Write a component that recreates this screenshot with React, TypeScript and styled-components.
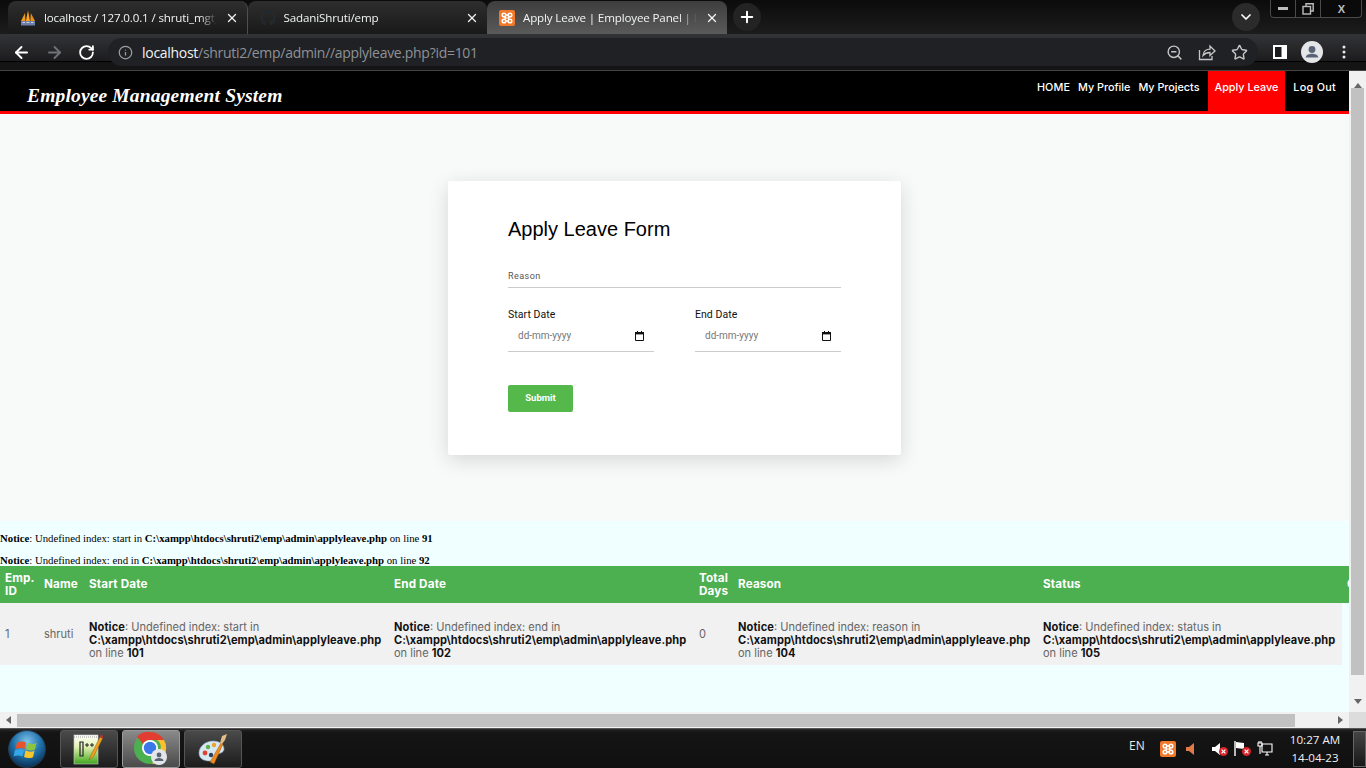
import React from "react";
import styled, { createGlobalStyle } from "styled-components";
import { ArrowLeft, ArrowRight, RotateCw, Info, ZoomOut, Star, ChevronDown, Plus, X } from "lucide-react";
import { FaGithub } from "react-icons/fa";

const Global = createGlobalStyle`
  html, body { margin: 0; padding: 0; height: 768px; overflow: hidden; background: #000; }
  #root { height: 768px; }
  * { box-sizing: border-box; }
`;

const Screen = styled.div`
  width: 1366px; height: 768px; display: flex; flex-direction: column; overflow: hidden;
  font-family: "Liberation Sans", Arial, sans-serif;
`;

/* ---------- browser chrome ---------- */
const TabStrip = styled.div`
  height: 34px; flex: none; display: flex; align-items: flex-start; padding-left: 8px;
  background: linear-gradient(#0b0b0b, #1c1c1c);
`;
const Tab = styled.div<{ $active?: boolean; $sep?: boolean }>`
  width: 239.5px; height: 33px; margin-top: 1px; flex: none;
  display: flex; align-items: center; padding: 0 8px 0 12px; gap: 8px;
  border-radius: 8px 8px 0 0;
  border-right: ${(p) => (p.$sep ? "1px solid #4f4f4f" : "none")};
  background: ${(p) => (p.$active ? "linear-gradient(#3e3e3e, #5a5a5a)" : "linear-gradient(#2e2e2e, #191919)")};
  color: #f1f3f4;
`;
const TabTitle = styled.span`
  flex: 1; min-width: 0; white-space: nowrap; overflow: hidden;
  font: 11.6px "Open Sans", sans-serif; letter-spacing: -0.15px;
  -webkit-mask-image: linear-gradient(to right, #000 90%, transparent 100%);
  mask-image: linear-gradient(to right, #000 90%, transparent 100%);
`;
const NewTab = styled.div`
  width: 28px; height: 28px; border-radius: 50%; background: #232323; margin: 3px 0 0 6px;
  display: flex; align-items: center; justify-content: center; color: #fff;
`;
const StripSpacer = styled.div`flex: 1;`;
const TabMenu = styled.div`
  width: 28px; height: 28px; border-radius: 50%; background: #2b2b2b; margin: 3px 10px 0 0;
  display: flex; align-items: center; justify-content: center; color: #fff;
`;
const WindowButtons = styled.div`
  width: 92px; height: 18px; display: flex; margin-right: 4px; background: #0a0a0a;
  border: 1px solid #4a4a4a; border-top: none; border-radius: 0 0 4px 4px;
`;
const WinButton = styled.div<{ $wide?: boolean }>`
  flex: ${(p) => (p.$wide ? "0 0 41px" : "0 0 25px")};
  display: flex; align-items: center; justify-content: center; color: #bdbdbd;
  font: bold 11px "Liberation Sans", sans-serif;
  border-right: ${(p) => (p.$wide ? "none" : "1px solid #4a4a4a")};
`;
const Toolbar = styled.div`
  height: 37px; flex: none; display: flex; align-items: center;
  background: linear-gradient(#333437 0, #1c1c1e 27px, #000 27px, #000 28px, #141414 28px);
  border-bottom: 1px solid #444;
`;
const NavIcons = styled.div`
  width: 108px; display: flex; align-items: center; gap: 14px; padding-left: 12px; flex: none;
`;
const UrlPill = styled.div`
  width: 1150px; height: 28px; border-radius: 14px; background: #202124; flex: none;
  display: flex; align-items: center; padding: 0 10px; color: #9aa0a6;
`;
const UrlText = styled.div`
  flex: 1; margin-left: 9px; font: 14px "Open Sans", sans-serif; color: #8e9297;
  letter-spacing: -0.29px; white-space: nowrap;
`;
const UrlHost = styled.span`color: #f1f3f4;`;
const PillIcons = styled.div`display: flex; align-items: center; gap: 15px; color: #c4c7c5;`;
const ToolIcons = styled.div`
  flex: 1; display: flex; align-items: center; gap: 14px; padding-left: 15px;
`;
const DotsSlot = styled.div`display: flex; margin-left: 5px;`;

/* ---------- page ---------- */
const Viewport = styled.div`
  flex: 1; min-height: 0; display: flex; overflow: hidden;
`;
const Page = styled.div`
  width: 1349px; flex: none; display: flex; flex-direction: column; overflow: hidden; background: #f0ffff;
`;
const Header = styled.header`
  height: 43px; flex: none; background: #000; border-bottom: 3px solid #ff0000;
  display: flex; justify-content: space-between; padding: 0 13px 0 27px;
`;
const Logo = styled.div`
  font: italic bold 19.5px "Liberation Serif", serif; color: #fff; padding-top: 14px; white-space: nowrap;
  letter-spacing: 0.16px;
`;
const NavList = styled.nav`display: flex; gap: 8px;`;
const NavItem = styled.a<{ $active?: boolean; $track?: number }>`
  height: 40px; padding: 0 ${(p) => (p.$active ? "7px" : "0")} 7px; display: flex; align-items: center;
  background: ${(p) => (p.$active ? "#ff0000" : "transparent")}; color: #fff;
  font: 500 10.8px Inter, sans-serif; white-space: nowrap;
  letter-spacing: ${(p) => p.$track ?? 0}px;
`;
const FormZone = styled.section`
  height: 407px; flex: none; background: #f8fafa; display: flex; justify-content: center; padding-top: 67px;
`;
const Card = styled.div`
  width: 453px; height: 274px; background: #fff; border-radius: 2px; padding: 36px 60px 0;
  box-shadow: 0 5px 20px rgba(0, 0, 0, 0.14);
`;
const FormTitle = styled.h2`
  margin: 0 0 25px; font: 400 20px/24px "Liberation Sans", sans-serif; color: #000;
`;
const ReasonField = styled.div`
  height: 22px; border-bottom: 1px solid #ccc; font: 9px/12px Roboto, sans-serif; color: #555; letter-spacing: 0.45px;
  padding-top: 4px;
`;
const DateRow = styled.div`display: flex; justify-content: space-between; margin-top: 20px;`;
const DateGroup = styled.div`width: 146px;`;
const DateLabel = styled.label`display: block; font: 10.5px/13px Roboto, sans-serif; color: #111; letter-spacing: 0.05px;`;
const DateField = styled.div`
  height: 31px; border-bottom: 1px solid #ccc; display: flex; align-items: center;
  justify-content: space-between; padding: 0 10px 1px;
  font: 10px Roboto, sans-serif; color: #777;
`;
const SubmitButton = styled.button`
  display: block; width: 65px; height: 27px; margin-top: 33px; border: none; border-radius: 2px; padding: 0 0 2px;
  background: #55b84a; color: #fff; font: bold 9.5px Roboto, sans-serif;
`;
const Lower = styled.section`flex: 1; min-height: 0; overflow: hidden; padding-top: 10px;`;
const Notice = styled.div`
  font: 10.75px/13px "Liberation Serif", serif; color: #000; height: 23px; padding-top: 1px; white-space: nowrap;
`;
const NoticeLast = styled(Notice)`height: 12px; padding-top: 0;`;
const Strong = styled.b`font-weight: bold;`;
const Table = styled.table`
  border-collapse: collapse; table-layout: fixed; width: 1353px;
`;
const Th = styled.th<{ $w: number }>`
  width: ${(p) => p.$w}px; height: 37px; padding: 0 5px; background: #4caf50; color: #fff; text-align: left;
  font: 700 11.7px/13px Inter, sans-serif; letter-spacing: 0.15px; overflow: hidden; white-space: nowrap;
`;
const Td = styled.td`
  height: 62px; padding: 0 5px; background: #f1f1f1; color: #666; white-space: nowrap; vertical-align: middle;
  font: 400 11.05px/13px Inter, sans-serif;
`;
const Php = styled.b`color: #111; font-weight: 700; letter-spacing: 0.11px;`;

/* ---------- scrollbars ---------- */
const VBar = styled.div`
  width: 17px; flex: none; background: #f1f1f1; display: flex; flex-direction: column; align-items: center;
  padding-top: 5px;
`;
const ArrowUp = styled.div`height: 12px; flex: none;`;
const VThumb = styled.div`width: 13px; height: 587px; flex: none; background: #c1c1c1;`;
const ArrowSlot = styled.div`flex: 1; display: flex; align-items: flex-end; padding-bottom: 6px;`;
const HBar = styled.div`
  height: 16px; flex: none; display: flex; align-items: center; background: #f1f1f1; padding-left: 5px;
`;
const HThumb = styled.div`width: 1278px; height: 13px; margin-left: 4px; flex: none; background: #c1c1c1;`;
const HSlot = styled.div`flex: 1; display: flex; justify-content: flex-end; padding-right: 4px;`;
const Corner = styled.div`width: 17px; height: 16px; flex: none; background: #dcdcdc;`;

/* ---------- taskbar ---------- */
const Taskbar = styled.footer`
  height: 40px; flex: none; display: flex; align-items: center; padding-left: 7px;
  background: linear-gradient(#2a2a2a 0, #151515 8%, #101010 100%); border-top: 1px solid #555;
`;
const Start = styled.div`width: 53px; flex: none; display: flex; align-items: center; padding-left: 1px;`;
const TaskButton = styled.div<{ $on?: boolean }>`
  width: 58px; height: 38px; margin-right: 4px; border-radius: 3px; display: flex; align-items: center; justify-content: center;
  border: 1px solid ${(p) => (p.$on ? "#9a9a9a" : "#555")};
  background: ${(p) => (p.$on ? "linear-gradient(#8a8a8a, #4a4a4a)" : "linear-gradient(#4a4a4a, #1c1c1c)")};
`;
const Tray = styled.div`
  margin-left: auto; display: flex; align-items: center; height: 100%; color: #fff;
`;
const Lang = styled.div`font: 12px "Open Sans", sans-serif; color: #e8e8e8; width: 31px; padding-bottom: 6px;`;
const TrayIcons = styled.div`display: flex; align-items: center; width: 122px;`;
const TraySlot = styled.div<{ $w: number }>`display: flex; align-items: flex-end; width: ${(p) => p.$w}px;`;
const Clock = styled.div`
  width: 66px; text-align: center; font: 11.6px/18px "Open Sans", sans-serif; color: #f0f0f0; white-space: nowrap;
`;
const ShowDesktop = styled.div`
  width: 13px; height: 36px; margin-left: 5px; border: 1px solid #666; background: linear-gradient(#444, #181818);
`;
const Overlap = styled.span`margin-left: -4px; display: flex;`;

/* ---------- drawings ---------- */
const PmaIcon = () => (
  <svg width="16" height="16" viewBox="0 0 16 16">
    <polygon points="1,11 5,3 5.4,11" fill="#f29b1d" />
    <polygon points="5.8,11 8,0.5 10,11" fill="#f6a623" />
    <polygon points="10.3,11 10.8,3 15,11" fill="#ef8e14" />
    <rect x="1" y="11" width="14" height="4.5" rx="0.5" fill="#6d7fa8" />
    <path d="M2.5 12.5h2.5M6.5 12.5h3M11 12.5h2.5" stroke="#c7d0e2" strokeWidth="1" />
  </svg>
);
const XamppIcon = () => (
  <svg width="16" height="16" viewBox="0 0 16 16">
    <rect width="16" height="16" rx="2" fill="#f2792a" />
    <g fill="none" stroke="#fff" strokeWidth="1.5">
      <circle cx="5" cy="5" r="1.8" />
      <circle cx="11" cy="5" r="1.8" />
      <circle cx="5" cy="11" r="1.8" />
      <circle cx="11" cy="11" r="1.8" />
      <path d="M6.8 5h2.4M6.8 11h2.4M5.5 6.8L7 8 5.5 9.2M10.5 6.8L9 8l1.5 1.2" />
    </g>
  </svg>
);
const ShareIcon = () => (
  <svg width="18" height="18" viewBox="0 0 18 18" fill="none" stroke="#c4c7c5" strokeWidth="1.3">
    <path d="M1.5 7v9.5h12.5V13" />
    <path d="M5 12.5c.3-4 3.3-6.3 7-6.3V3l5 5-5 4.5V9.5c-3 0-5.3 1-7 3z" />
  </svg>
);
const SidePanelIcon = () => (
  <svg width="14" height="14" viewBox="0 0 14 14">
    <rect width="14" height="14" fill="#fff" />
    <rect x="2" y="2" width="6.5" height="10" fill="#1b1b1d" />
  </svg>
);
const AvatarIcon = () => (
  <svg width="22" height="22" viewBox="0 0 22 22">
    <circle cx="11" cy="11" r="11" fill="#e3e5e8" />
    <circle cx="11" cy="8.5" r="3.4" fill="#596377" />
    <path d="M4.8 16.5c0-2.8 3.6-3.7 6.2-3.7s6.2.9 6.2 3.7z" fill="#596377" />
  </svg>
);
const DotsIcon = () => (
  <svg width="4" height="14" viewBox="0 0 4 14">
    <circle cx="2" cy="2" r="1.5" fill="#e8eaed" />
    <circle cx="2" cy="7" r="1.5" fill="#e8eaed" />
    <circle cx="2" cy="12" r="1.5" fill="#e8eaed" />
  </svg>
);
const MinimizeIcon = () => (
  <svg width="10" height="3" viewBox="0 0 10 3">
    <rect width="10" height="3" fill="#bdbdbd" />
  </svg>
);
const RestoreIcon = () => (
  <svg width="12" height="12" viewBox="0 0 12 12" fill="none" stroke="#bdbdbd" strokeWidth="1.4">
    <path d="M4 3V.8h7.2V8H9" />
    <rect x="1" y="3.5" width="7.5" height="7.5" />
  </svg>
);
const CalendarIcon = () => (
  <svg width="9" height="10" viewBox="0 0 9 10">
    <path d="M.5 1.5h8v8h-8z" fill="none" stroke="#111" />
    <rect x="0" y="1" width="9" height="2.4" fill="#111" />
    <rect x="2" y="0" width="1" height="1" fill="#111" />
    <rect x="6" y="0" width="1" height="1" fill="#111" />
  </svg>
);
const Tri = ({ dir }: { dir: "up" | "down" | "left" | "right" }) => {
  const pts = { up: "0,6 4,1 8,6", down: "0,1 8,1 4,6", left: "6,0 6,8 1,4", right: "1,0 1,8 6,4" }[dir];
  return (
    <svg width="8" height="8" viewBox="0 0 8 8">
      <polygon points={pts} fill="#666" />
    </svg>
  );
};
const WinOrb = () => (
  <svg width="38" height="38" viewBox="0 0 38 38">
    <defs>
      <radialGradient id="orb" cx="50%" cy="30%" r="70%">
        <stop offset="0" stopColor="#7fc4ea" />
        <stop offset="0.55" stopColor="#1d6fa8" />
        <stop offset="1" stopColor="#0b2f52" />
      </radialGradient>
    </defs>
    <circle cx="19" cy="19" r="18.5" fill="url(#orb)" stroke="#26394a" />
    <path d="M9 12.5c3-1.5 6-1.5 9 0l-1.5 6.5c-3-1.5-6-1.5-9 0z" fill="#e8532b" />
    <path d="M19.5 12.8c3 1.5 6 1.5 9 .2l-1.5 6.5c-3 1.2-6 1.2-9-.2z" fill="#8cc63f" />
    <path d="M7 20c3-1.5 6-1.5 9 0l-1.5 6.5c-3-1.5-6-1.5-9 0z" fill="#35a6e8" />
    <path d="M17.5 20.5c3 1.5 6 1.5 9 .2L25 27.2c-3 1.2-6 1.2-9-.2z" fill="#f5c62b" />
  </svg>
);
const NotepadIcon = () => (
  <svg width="32" height="34" viewBox="0 0 32 34">
    <defs>
      <linearGradient id="npg" x1="0" y1="0" x2="0" y2="1">
        <stop offset="0" stopColor="#fff" />
        <stop offset="0.4" stopColor="#e4f2b4" />
        <stop offset="1" stopColor="#3fa51c" />
      </linearGradient>
    </defs>
    <rect x="1" y="3" width="24" height="29" fill="url(#npg)" stroke="#ccc" strokeWidth="0.6" />
    <path d="M1 5h24" stroke="#999" strokeWidth="1" strokeDasharray="1 1" />
    <path d="M7 10h3v14H7z" fill="none" stroke="#222" strokeWidth="1.2" />
    <path d="M12 13h4M14 11v4M17 13h4M19 11v4" stroke="#222" strokeWidth="1" />
    <path d="M16 28l2-5 9-18 2.6 1.4-9 18z" fill="#f0a020" stroke="#8a5a10" strokeWidth="0.5" />
    <path d="M27 5l.8-2.5 2.4 1.2-.6 2.7z" fill="#b33" />
  </svg>
);
const ChromeIcon = () => (
  <svg width="34" height="34" viewBox="0 0 34 34">
    <circle cx="16" cy="16" r="16" fill="#4caf50" />
    <path d="M16 0a16 16 0 0 1 13.9 8H16a8 8 0 0 0-7 4L3 4.5A16 16 0 0 1 16 0z" fill="#e23d30" />
    <path d="M30 8a16 16 0 0 1-12 23.9l6-11a8 8 0 0 0-1-12.9z" fill="#fbc02d" />
    <circle cx="16" cy="16" r="8" fill="#fff" />
    <circle cx="16" cy="16" r="6.2" fill="#3b78e7" />
    <circle cx="25" cy="25" r="8" fill="#e3e5e8" />
    <circle cx="25" cy="23" r="2.4" fill="#596377" />
    <path d="M20.5 29c0-2.2 2.4-3 4.5-3s4.5.8 4.5 3z" fill="#596377" />
  </svg>
);
const PaintIcon = () => (
  <svg width="34" height="32" viewBox="0 0 34 32">
    <path d="M3 20c0-7 7-12 14-12 6 0 11 3 11 8 0 4-5 4-7 6-1 3-1 6-7 6-6 0-11-2-11-8z" fill="#d6e8f2" stroke="#8aa8bb" strokeWidth="0.6" />
    <circle cx="9" cy="20" r="2.4" fill="#e0402f" />
    <circle cx="12" cy="14" r="2.2" fill="#5bb04a" />
    <circle cx="18" cy="12" r="2.2" fill="#f0a030" />
    <circle cx="15" cy="22" r="2.2" fill="#2c3e60" />
    <path d="M14 29L25 10l2 1-9 20z" fill="#ee8a20" stroke="#8a4f10" strokeWidth="0.4" />
    <path d="M24 10l2-7 5-2-2 6-3 4z" fill="#e3bd86" />
  </svg>
);
const Speaker = ({ color = "#fff" }: { color?: string }) => (
  <svg width="12" height="14" viewBox="0 0 12 14">
    <path d="M1 5h3l5-4v12L4 9H1z" fill={color} />
  </svg>
);
const RedBadge = () => (
  <svg width="9" height="9" viewBox="0 0 9 9">
    <circle cx="4.5" cy="4.5" r="4.5" fill="#d8232a" />
    <path d="M2.6 2.6l3.8 3.8M6.4 2.6L2.6 6.4" stroke="#fff" strokeWidth="1.3" />
  </svg>
);
const FlagIcon = () => (
  <svg width="12" height="15" viewBox="0 0 12 15">
    <path d="M1 0v15" stroke="#fff" strokeWidth="1.4" />
    <path d="M2 1l8 1v6l-8-1z" fill="#fff" />
  </svg>
);
const NetworkIcon = () => (
  <svg width="16" height="15" viewBox="0 0 16 15">
    <path d="M5 3h10v8H5zM8 14h4M10 11v3" fill="none" stroke="#fff" strokeWidth="1.1" />
    <path d="M2 0v2M4 0v2M1 2h4v3H1zM3 5v8" fill="none" stroke="#fff" strokeWidth="1.1" />
  </svg>
);

const columns = [39, 45, 305, 305, 39, 305, 304, 11];
const pathText = "C:\\xampp\\htdocs\\shruti2\\emp\\admin\\applyleave.php";

const PhpNotice = ({ name, line }: { name: string; line: number }) => (
  <Td>
    <br />
    <Php>Notice</Php>: Undefined index: {name} in
    <br />
    <Php>{pathText}</Php>
    <br />
    on line <Php>{line}</Php>
  </Td>
);

export default function App() {
  return (
    <Screen>
      <Global />
      <TabStrip>
        <Tab $sep>
          <PmaIcon />
          <TabTitle>localhost / 127.0.0.1 / shruti_mgt_system</TabTitle>
          <X size={14} strokeWidth={2.2} />
        </Tab>
        <Tab>
          <FaGithub size={16} color="#24292e" />
          <TabTitle>SadaniShruti/emp</TabTitle>
          <X size={14} strokeWidth={2.2} />
        </Tab>
        <Tab $active>
          <XamppIcon />
          <TabTitle>Apply Leave | Employee Panel | Employee</TabTitle>
          <X size={14} strokeWidth={2.2} />
        </Tab>
        <NewTab>
          <Plus size={18} strokeWidth={2.6} />
        </NewTab>
        <StripSpacer />
        <TabMenu>
          <ChevronDown size={16} strokeWidth={2.6} />
        </TabMenu>
        <WindowButtons>
          <WinButton>
            <MinimizeIcon />
          </WinButton>
          <WinButton>
            <RestoreIcon />
          </WinButton>
          <WinButton $wide>X</WinButton>
        </WindowButtons>
      </TabStrip>
      <Toolbar>
        <NavIcons>
          <ArrowLeft size={19} color="#fff" strokeWidth={2.4} />
          <ArrowRight size={19} color="#6f7174" strokeWidth={2.4} />
          <RotateCw size={17} color="#fff" strokeWidth={2.6} />
        </NavIcons>
        <UrlPill>
          <Info size={15} color="#9aa0a6" />
          <UrlText>
            <UrlHost>localhost</UrlHost>/shruti2/emp/admin//applyleave.php?id=101
          </UrlText>
          <PillIcons>
            <ZoomOut size={17} />
            <ShareIcon />
            <Star size={17} />
          </PillIcons>
        </UrlPill>
        <ToolIcons>
          <SidePanelIcon />
          <AvatarIcon />
          <DotsSlot>
            <DotsIcon />
          </DotsSlot>
        </ToolIcons>
      </Toolbar>
      <Viewport>
        <Page>
          <Header>
            <Logo>Employee Management System</Logo>
            <NavList>
              <NavItem $track={0.1}>HOME</NavItem>
              <NavItem>My Profile</NavItem>
              <NavItem>My Projects</NavItem>
              <NavItem $active>Apply Leave</NavItem>
              <NavItem $track={0.3}>Log Out</NavItem>
            </NavList>
          </Header>
          <FormZone>
            <Card>
              <FormTitle>Apply Leave Form</FormTitle>
              <ReasonField>Reason</ReasonField>
              <DateRow>
                <DateGroup>
                  <DateLabel>Start Date</DateLabel>
                  <DateField>
                    dd-mm-yyyy
                    <CalendarIcon />
                  </DateField>
                </DateGroup>
                <DateGroup>
                  <DateLabel>End Date</DateLabel>
                  <DateField>
                    dd-mm-yyyy
                    <CalendarIcon />
                  </DateField>
                </DateGroup>
              </DateRow>
              <SubmitButton>Submit</SubmitButton>
            </Card>
          </FormZone>
          <Lower>
            <Notice>
              <Strong>Notice</Strong>: Undefined index: start in <Strong>{pathText}</Strong> on line <Strong>91</Strong>
            </Notice>
            <NoticeLast>
              <Strong>Notice</Strong>: Undefined index: end in <Strong>{pathText}</Strong> on line <Strong>92</Strong>
            </NoticeLast>
            <Table>
              <thead>
                <tr>
                  <Th $w={columns[0]}>
                    Emp.
                    <br />
                    ID
                  </Th>
                  <Th $w={columns[1]}>Name</Th>
                  <Th $w={columns[2]}>Start Date</Th>
                  <Th $w={columns[3]}>End Date</Th>
                  <Th $w={columns[4]}>
                    Total
                    <br />
                    Days
                  </Th>
                  <Th $w={columns[5]}>Reason</Th>
                  <Th $w={columns[6]}>Status</Th>
                  <Th $w={columns[7]}>Options</Th>
                </tr>
              </thead>
              <tbody>
                <tr>
                  <Td>1</Td>
                  <Td>shruti</Td>
                  <PhpNotice name="start" line={101} />
                  <PhpNotice name="end" line={102} />
                  <Td>0</Td>
                  <PhpNotice name="reason" line={104} />
                  <PhpNotice name="status" line={105} />
                </tr>
              </tbody>
            </Table>
          </Lower>
        </Page>
        <VBar>
          <ArrowUp>
            <Tri dir="up" />
          </ArrowUp>
          <VThumb />
          <ArrowSlot>
            <Tri dir="down" />
          </ArrowSlot>
        </VBar>
      </Viewport>
      <HBar>
        <Tri dir="left" />
        <HThumb />
        <HSlot>
          <Tri dir="right" />
        </HSlot>
        <Corner />
      </HBar>
      <Taskbar>
        <Start>
          <WinOrb />
        </Start>
        <TaskButton>
          <NotepadIcon />
        </TaskButton>
        <TaskButton $on>
          <ChromeIcon />
        </TaskButton>
        <TaskButton>
          <PaintIcon />
        </TaskButton>
        <Tray>
          <Lang>EN</Lang>
          <TrayIcons>
            <TraySlot $w={25}>
              <XamppIcon />
            </TraySlot>
            <TraySlot $w={26}>
              <Speaker color="#e07a4a" />
            </TraySlot>
            <TraySlot $w={23}>
              <Speaker />
              <Overlap>
                <RedBadge />
              </Overlap>
            </TraySlot>
            <TraySlot $w={23}>
              <FlagIcon />
              <Overlap>
                <RedBadge />
              </Overlap>
            </TraySlot>
            <TraySlot $w={25}>
              <NetworkIcon />
            </TraySlot>
          </TrayIcons>
          <Clock>
            10:27 AM
            <br />
            14-04-23
          </Clock>
          <ShowDesktop />
        </Tray>
      </Taskbar>
    </Screen>
  );
}
